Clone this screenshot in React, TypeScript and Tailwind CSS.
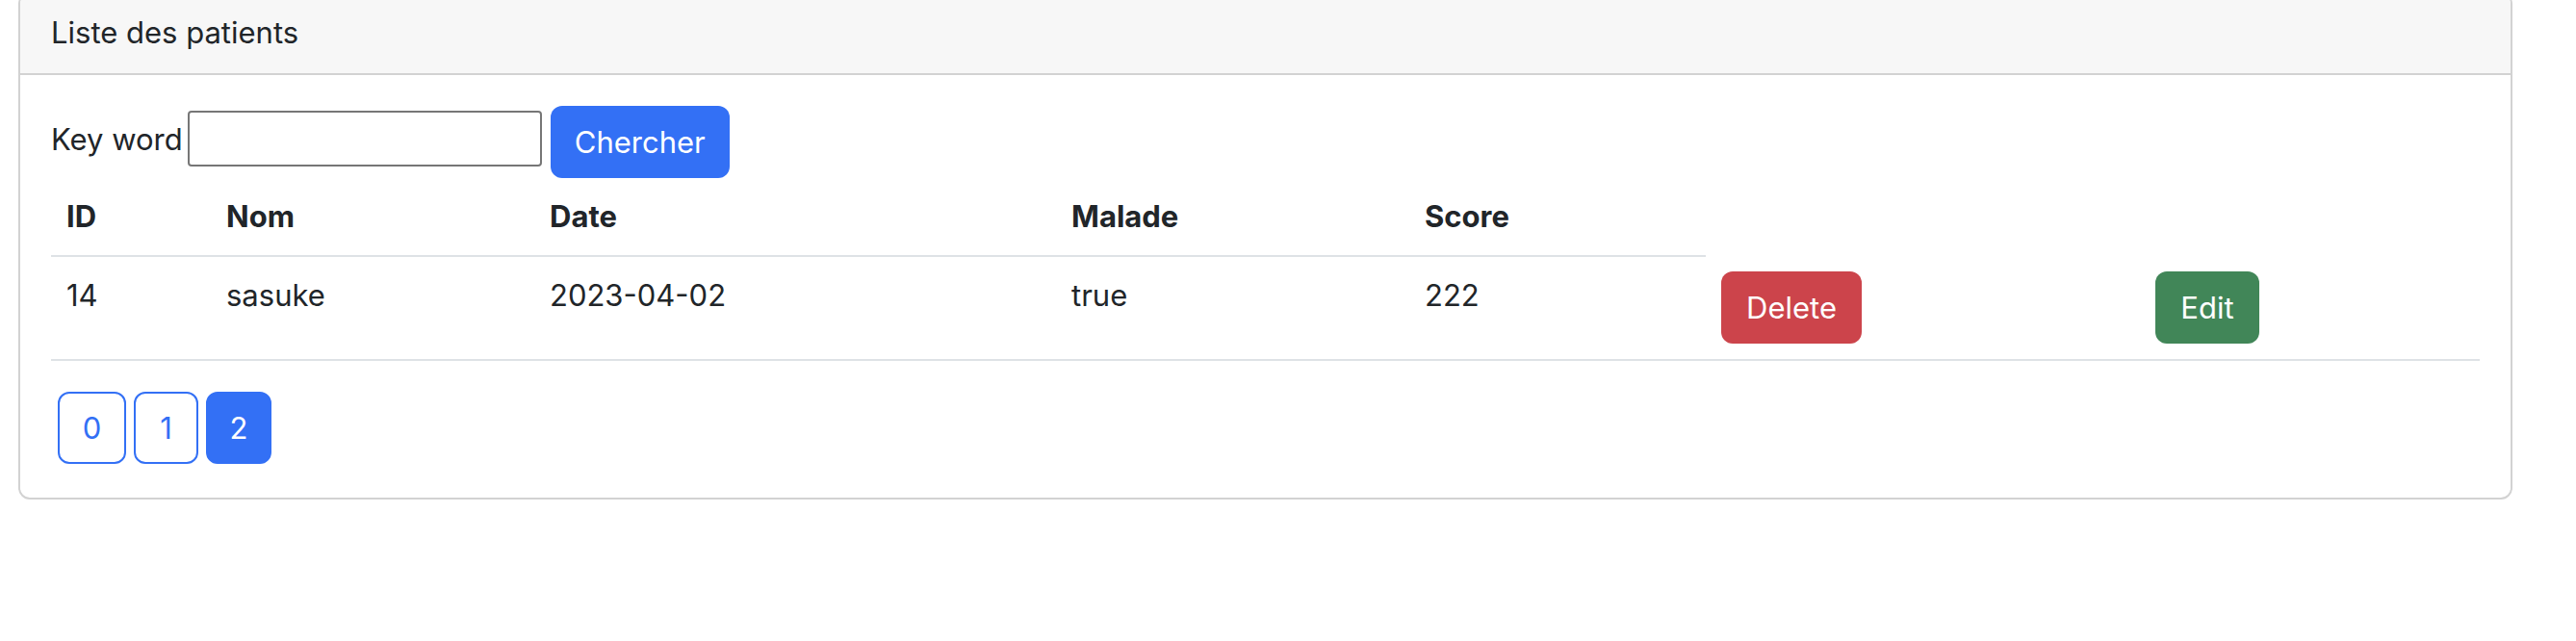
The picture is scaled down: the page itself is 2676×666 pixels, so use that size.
import React from "react";

const font = { fontFamily: "Inter, 'Liberation Sans', sans-serif" };

export default function App() {
  return (
    <div className="min-h-[666px] bg-white text-[#212529]" style={font}>
      <div className="ml-[19px] mr-[66px] mt-[-8px] rounded-[12px] border-2 border-[#d2d2d2] bg-white">
        <div className="rounded-t-[10px] border-b-2 border-[#d2d2d2] bg-[#f7f7f7] px-[32px] pt-[16px] pb-[18px] text-[31px] leading-[48px]">
          Liste des patients
        </div>
        <div className="px-[32px] pt-[32px] pb-[35px] text-[31px] leading-[48px]">
          <div className="flex items-start">
            <span className="mt-[11px]">Key word</span>
            <input
              type="text"
              className="ml-[5px] mt-[5px] h-[58px] w-[368px] rounded-[4px] border-2 border-[#767676] bg-white"
            />
            <button className="ml-[9px] h-[75px] w-[186px] rounded-[12px] bg-[#3370f5] text-white">
              Chercher
            </button>
          </div>
          <table className="mb-[32px] w-full table-fixed border-collapse text-left">
            <colgroup>
              <col className="w-[166px]" />
              <col className="w-[336px]" />
              <col className="w-[542px]" />
              <col className="w-[367px]" />
              <col className="w-[308px]" />
              <col className="w-[451px]" />
              <col />
            </colgroup>
            <thead>
              <tr>
                {["ID", "Nom", "Date", "Malade", "Score"].map((h) => (
                  <th
                    key={h}
                    className="border-b-2 border-[#dee2e6] px-[16px] py-[16px] align-bottom font-bold"
                  >
                    {h}
                  </th>
                ))}
              </tr>
            </thead>
            <tbody>
              <tr>
                <td className="border-b-2 border-[#dee2e6] p-[16px] align-top">14</td>
                <td className="border-b-2 border-[#dee2e6] p-[16px] align-top">sasuke</td>
                <td className="border-b-2 border-[#dee2e6] p-[16px] align-top">2023-04-02</td>
                <td className="border-b-2 border-[#dee2e6] p-[16px] align-top">true</td>
                <td className="border-b-2 border-[#dee2e6] p-[16px] align-top">222</td>
                <td className="border-b-2 border-[#dee2e6] p-[16px] align-top">
                  <button className="h-[75px] w-[146px] rounded-[12px] bg-[#cc444b] text-white">
                    Delete
                  </button>
                </td>
                <td className="border-b-2 border-[#dee2e6] p-[16px] align-top">
                  <button className="h-[75px] w-[108px] rounded-[12px] bg-[#418658] text-white">
                    Edit
                  </button>
                </td>
              </tr>
            </tbody>
          </table>
          <div className="flex gap-[8px] pl-[7px]">
            <button className="h-[75px] w-[71px] rounded-[12px] border-2 border-[#3370f5] text-[#3370f5]">
              0
            </button>
            <button className="h-[75px] w-[67px] rounded-[12px] border-2 border-[#3370f5] text-[#3370f5]">
              1
            </button>
            <button className="h-[75px] w-[68px] rounded-[12px] border-2 border-[#3370f5] bg-[#3370f5] text-white">
              2
            </button>
          </div>
        </div>
      </div>
    </div>
  );
}
